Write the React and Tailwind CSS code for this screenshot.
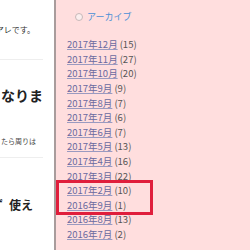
export default function App() {
  const items = [
    ["2017年12月", "15"],
    ["2017年11月", "27"],
    ["2017年10月", "20"],
    ["2017年9月", "9"],
    ["2017年8月", "7"],
    ["2017年7月", "6"],
    ["2017年6月", "7"],
    ["2017年5月", "13"],
    ["2017年4月", "16"],
    ["2017年3月", "22"],
    ["2017年2月", "10"],
    ["2016年9月", "1"],
    ["2016年8月", "13"],
    ["2016年7月", "2"],
  ];
  const font = { fontFamily: '"Noto Sans CJK JP", "Noto Sans", sans-serif' };
  return (
    <div className="relative w-[250px] h-[250px] flex overflow-hidden bg-white" style={font}>
      <div className="w-[54px] shrink-0 h-full overflow-hidden bg-white flex flex-col">
        <div className="mt-[23px] h-[14px] flex justify-end whitespace-nowrap text-[8px] leading-[14px] text-[#333] pr-[19px]">
          <span>アレです。</span>
        </div>
        <div className="mt-[22px] h-px w-[43px] bg-[#eeeeee]" />
        <div className="mt-[25px] h-[20px] whitespace-nowrap text-[14px] leading-[20px] font-bold text-[#222] pl-[1px]">
          なりま
        </div>
        <div className="mt-[30px] h-[12px] whitespace-nowrap text-[7px] leading-[12px] text-[#444] pl-[1px]">
          たら周りは
        </div>
        <div className="mt-[10px] h-px w-[43px] bg-[#eeeeee]" />
        <div className="mt-[37px] h-[20px] flex whitespace-nowrap text-[12px] leading-[20px] font-bold text-[#222]">
          <span className="inline-block w-[12px] shrink-0 ml-[-9px] mr-[6px]">ず</span>
          <span>使え</span>
        </div>
      </div>
      <div className="w-[2px] shrink-0 h-full bg-[#a99c9c]" />
      <div className="flex-1 h-full bg-[#ffdede] flex flex-col pl-[11px]">
        <div className="mt-[10px] h-[14px] flex items-center gap-[4px] pl-[8px] text-[9px] leading-[14px] text-[#4a8fd6]">
          <span className="w-[8px] h-[8px] rounded-full border border-[#c8b8b8] bg-[#fbeeee]" />
          <span>アーカイブ</span>
        </div>
        <div className="mt-[13px] flex flex-col">
          {items.map(([m, c], i) => (
            <div key={i} className="h-[14.6px] flex items-center whitespace-nowrap text-[9.5px] leading-[14px]">
              <span className="text-[#6a6aa0] underline decoration-[#9a9ac0]">{m}</span>
              <span className="text-[#555] ml-[2px]">({c})</span>
            </div>
          ))}
        </div>
      </div>
      <div className="absolute left-[56px] top-[180px] w-[97px] h-[35px] border-[3px] border-[#e01e3c]" />
    </div>
  );
}
